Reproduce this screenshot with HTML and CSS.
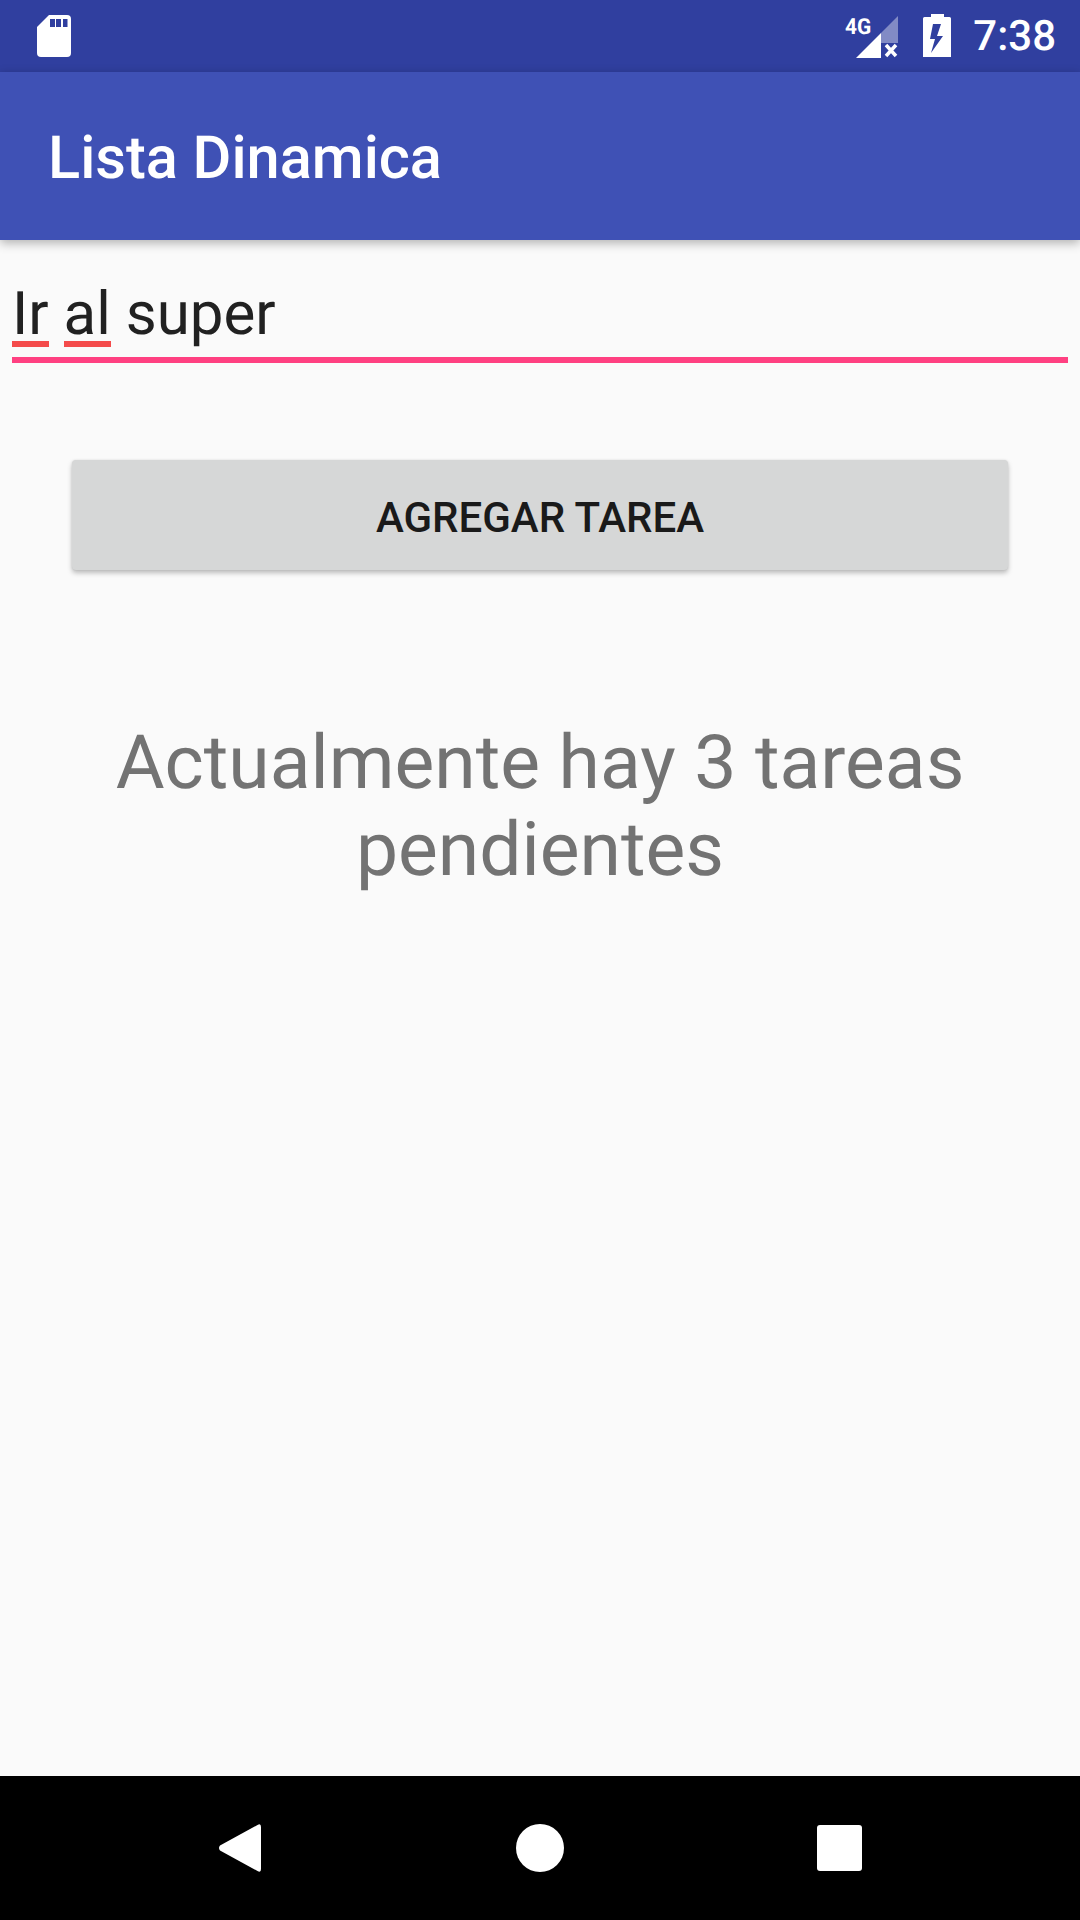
FILE: index.html
```html
<!DOCTYPE html>
<html lang="es">
<head>
  <meta charset="UTF-8" />
  <title>Lista Dinamica</title>
  <link rel="stylesheet" href="styles.css">
</head>
<body>
  <div class="screen">
    <div class="status-bar">
      <svg width="34" height="42" viewBox="0 0 34 42">
        <path fill="#fff" d="M12 0H30a4 4 0 0 1 4 4V38a4 4 0 0 1-4 4H4a4 4 0 0 1-4-4V12Z"/>
        <path fill="#303f9f" d="M13 4h5v8h-5ZM19 4h5v8h-5ZM26 4h4.500v8H26Z"/>
      </svg>
      <div class="status-right">
        <div class="signal">
          <span class="net-type">4G</span>
          <svg width="42" height="42" viewBox="0 0 42 42">
            <path fill="#fff" fill-opacity="0.4" d="M42 0V27H25V17Z"/>
            <path fill="#fff" d="M25 17V42H0Z"/>
            <path fill="none" stroke="#fff" stroke-width="3.500" d="M30 29L40 40M40 29L30 40"/>
          </svg>
        </div>
        <svg class="icon-battery" width="28" height="43" viewBox="0 0 28 43">
          <path fill="#fff" fill-rule="evenodd" d="M8 0H21V3H26.500A1.500 1.500 0 0 1 28 4.500V43H0V4.500A1.500 1.500 0 0 1 1.500 3H8ZM10 10L7 25H12L8 39L20 22H14L18 10Z"/>
        </svg>
        <span class="clock">7:38</span>
      </div>
    </div>

    <header class="app-bar">
      <h1>Lista Dinamica</h1>
    </header>

    <main class="content">
      <div class="field">
        <span class="typo">Ir</span> <span class="typo">al</span> super
      </div>
      <button class="add-btn">AGREGAR TAREA</button>
      <p class="pending">Actualmente hay 3 tareas pendientes</p>
    </main>

    <nav class="nav-bar">
      <svg width="44" height="48" viewBox="0 0 44 48">
        <path fill="#fff" d="M39.500 1Q43 -1 43 3V45Q43 49 39.500 47L2 26.500Q0 24 2 21.500Z"/>
      </svg>
      <div class="nav-home"></div>
      <div class="nav-recent"></div>
    </nav>
  </div>
</body>
</html>
```

FILE: styles.css
```css
* {
  box-sizing: border-box;
}

body {
  margin: 0;
  font-family: 'Roboto', sans-serif;
  background: #fafafa;
  text-rendering: geometricPrecision;
}

.screen {
  width: 1080px;
  height: 1920px;
  display: flex;
  flex-direction: column;
}

.status-bar {
  height: 72px;
  background: #303f9f;
  display: flex;
  align-items: center;
  justify-content: space-between;
  padding: 0 24px 0 37px;
  color: white;
}

.status-right {
  display: flex;
  align-items: center;
}

.signal {
  display: flex;
  height: 44px;
  padding-left: 11px;
  position: relative;
}

.signal svg {
  align-self: flex-end;
}

.net-type {
  position: absolute;
  left: 0;
  top: 2px;
  font-size: 22px;
  font-weight: 700;
  line-height: 24px;
  transform: scaleX(0.95);
  transform-origin: left;
}

.icon-battery {
  margin: 0 0 1px 25px;
}

.clock {
  font-size: 42px;
  font-weight: 500;
  margin-left: 22px;
}

.app-bar {
  height: 168px;
  background: #3f51b5;
  padding: 4px 48px 0;
  display: flex;
  align-items: center;
  box-shadow: 0 3px 10px rgba(0, 0, 0, 0.3);
  position: relative;
}

.app-bar h1 {
  margin: 0;
  color: white;
  font-size: 59.500px;
  font-weight: 500;
}

.content {
  flex: 1;
  display: flex;
  flex-direction: column;
  align-items: center;
}

.field {
  align-self: stretch;
  margin: 40px 12px 0;
  height: 83px;
  border-bottom: 6px solid #ff4081;
  font-size: 60px;
  line-height: 68px;
  color: #212121;
}

.typo {
  border-bottom: 6px solid #f44b4b;
  display: inline-block;
  height: 67px;
}

.add-btn {
  margin-top: 97px;
  width: 936px;
  height: 110px;
  padding-top: 6px;
  border: none;
  border-radius: 4px;
  background: #d6d7d7;
  box-shadow: 0 3px 5px rgba(0, 0, 0, 0.25), 0 0 2px rgba(0, 0, 0, 0.1);
  font-family: inherit;
  font-size: 42px;
  font-weight: 500;
  color: #1a1a1a;
}

.pending {
  margin: 150px 0 0;
  width: 936px;
  text-align: center;
  font-size: 75px;
  line-height: 87px;
  color: #737373;
}

.nav-bar {
  height: 144px;
  background: black;
  display: flex;
  align-items: center;
  padding-left: 218px;
}

.nav-home {
  width: 48px;
  height: 48px;
  border-radius: 50%;
  background: white;
  margin-left: 254px;
}

.nav-recent {
  width: 45px;
  height: 46px;
  border-radius: 3px;
  background: white;
  margin-left: 253px;
}
```
